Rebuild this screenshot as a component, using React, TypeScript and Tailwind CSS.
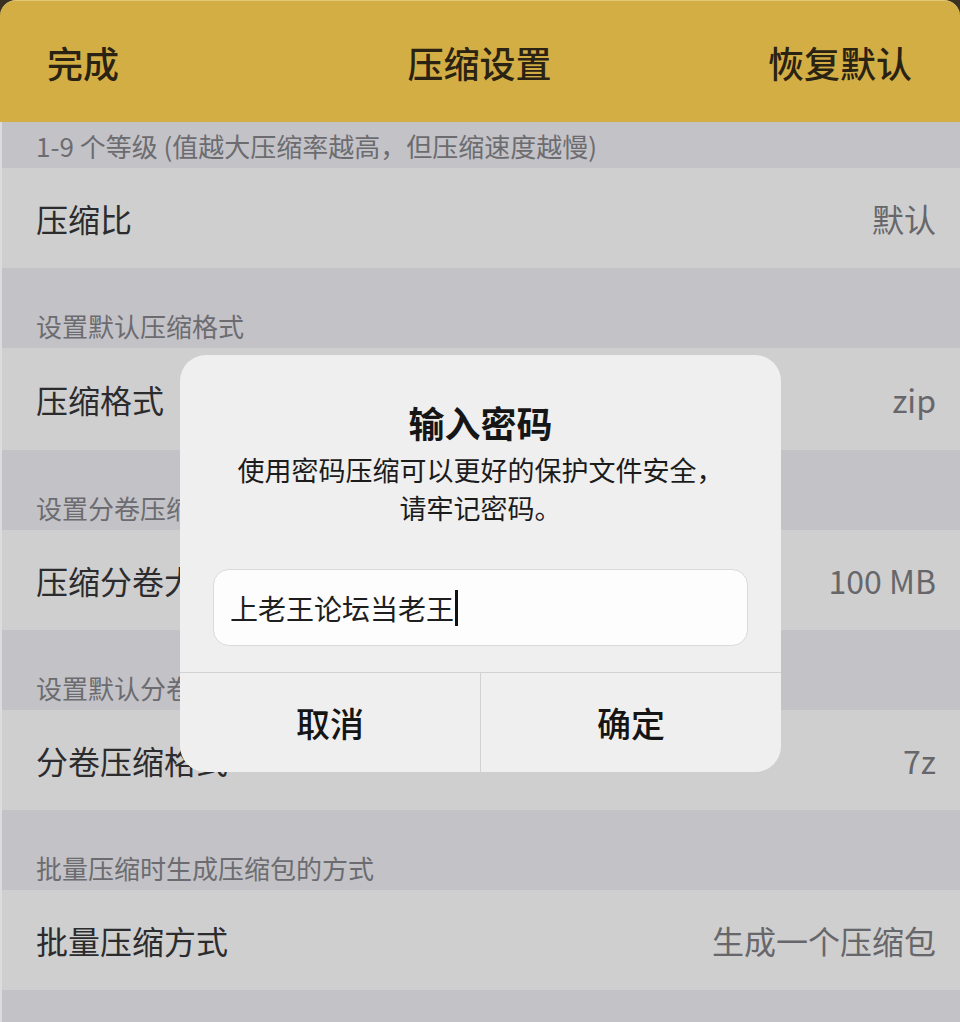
import React from 'react';

// one settings group: grey caption band + light row with label / value
interface SettingRow {
    caption: string;
    label: string;
    value: string;
    captionHeight: string;
    rowHeight: string;
}

const rows: SettingRow[] = [
    { caption: '1-9 个等级 (值越大压缩率越高，但压缩速度越慢)', label: '压缩比', value: '默认', captionHeight: 'h-[46px]', rowHeight: 'h-[100px]' },
    { caption: '设置默认压缩格式', label: '压缩格式', value: 'zip', captionHeight: 'h-[80px]', rowHeight: 'h-[102px]' },
    { caption: '设置分卷压缩大小', label: '压缩分卷大小', value: '100 MB', captionHeight: 'h-[80px]', rowHeight: 'h-[100px]' },
    { caption: '设置默认分卷压缩格式', label: '分卷压缩格式', value: '7z', captionHeight: 'h-[80px]', rowHeight: 'h-[100px]' },
    { caption: '批量压缩时生成压缩包的方式', label: '批量压缩方式', value: '生成一个压缩包', captionHeight: 'h-[80px]', rowHeight: 'h-[100px]' },
];

const font = "font-['Noto_Sans_CJK_SC','Noto_Sans',sans-serif]";

const PasswordDialog: React.FC = () => (
    <div className="absolute left-[180px] top-[355px] w-[601px] h-[417px] rounded-[26px] bg-[#efefef] flex flex-col overflow-hidden">
        <h2 className="pt-[45px] text-center text-[36px] leading-[44px] font-bold text-[#161616]">输入密码</h2>
        <p className="mt-[7px] text-center text-[27px] leading-[38px] text-[#1c1c1c]">
            使用密码压缩可以更好的保护文件安全，<br />请牢记密码。
        </p>
        <div className="mt-[42px] mx-[33px] h-[77px] rounded-[16px] bg-[#fdfdfd] border border-[#dadada] flex items-center px-[16px]">
            <span className="text-[28px] leading-none text-[#1e1e1e]">上老王论坛当老王</span>
            <span className="ml-[1px] w-[3px] h-[36px] bg-[#111]" />
        </div>
        <div className="mt-[26px] flex-1 flex border-t border-[#d2d2d2]">
            <button className="flex-1 flex items-center justify-center text-[34px] font-medium text-[#151515]">取消</button>
            <div className="w-px bg-[#d2d2d2]" />
            <button className="flex-1 flex items-center justify-center text-[34px] font-medium text-[#151515]">确定</button>
        </div>
    </div>
);

export default function App() {
    return (
        <div className={`relative w-[960px] h-[1022px] overflow-hidden bg-[#3a3122] ${font}`}>
            <header className="h-[122px] rounded-t-[16px] bg-[#d3ae45] border-t border-[#e2c978] flex items-center justify-between pl-[47px] pr-[48px] text-[36px] font-medium text-[#2a2212]">
                <span className="w-[200px]">完成</span>
                <span>压缩设置</span>
                <span className="w-[200px] text-right">恢复默认</span>
            </header>
            <div className="bg-[#c3c2c7] border-l-[2px] border-[#dcdcdc]">
                {rows.map(row => (
                    <div key={row.label}>
                        <div className={`${row.captionHeight} flex items-end pl-[34px] pb-[8px] text-[26px] leading-[28px] text-[#6c6c70]`}>
                            {row.caption}
                        </div>
                        <div className={`${row.rowHeight} bg-[#cfcfcf] flex items-center justify-between pl-[34px] pr-[24px]`}>
                            <span className="text-[32px] text-[#2c2c2e]">{row.label}</span>
                            <span className="text-[32px] text-[#67676b]">{row.value}</span>
                        </div>
                    </div>
                ))}
                <div className="h-[40px]" />
            </div>
            <PasswordDialog />
        </div>
    );
}
